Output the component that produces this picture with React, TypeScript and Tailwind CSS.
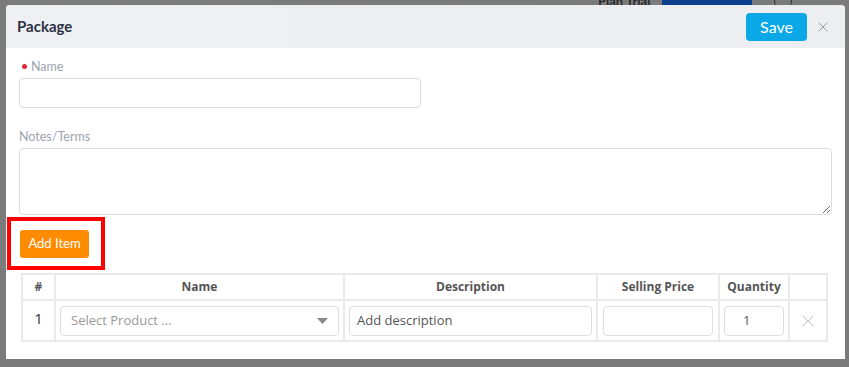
import React from 'react';
import { X } from 'lucide-react';

const cols = [
  { label: '#', w: 'w-[33px]' },
  { label: 'Name', w: 'w-[289px]' },
  { label: 'Description', w: 'w-[253px]' },
  { label: 'Selling Price', w: 'w-[122px]' },
  { label: 'Quantity', w: 'w-[70px]' },
  { label: '', w: 'flex-1' },
];

const App: React.FC = () => {
  return (
    <div className="relative w-[849px] h-[367px] overflow-hidden bg-[#7b7b7b] font-['Lato',sans-serif]">
      {/* page behind the overlay */}
      <div className="flex items-start h-[12px] pl-[598px] gap-[8px]">
        <span className="text-[13px] font-bold leading-[10px] text-[#2a2a2a] -mt-[4px]">Plan Trial</span>
        <div className="w-[90px] h-[12px] bg-[#0b3f8c] ml-[4px]" />
        <div className="w-[18px] h-[18px] rounded-full border border-[#333] ml-[14px] -mt-[8px]" />
      </div>

      {/* modal */}
      <div className="absolute left-[6px] top-[5px] w-[839px] h-[354px] bg-white rounded-t-[4px] flex flex-col">
        <div className="h-[43px] flex items-center pl-[11px] pr-[14px] bg-gradient-to-r from-[#eef0f4] to-[#eceef2] rounded-t-[4px]">
          <h2 className="text-[15px] font-bold text-[#2d3142] flex-1">Package</h2>
          <button className="h-[28px] w-[61px] rounded-[4px] bg-[#0aa8e6] text-white text-[16px] mr-[8px]">Save</button>
          <X size={16} strokeWidth={1.2} className="text-[#8a8a8a]" />
        </div>

        <div className="flex flex-col pl-[13px] pr-[13px]">
          <label className="mt-[11px] h-[15px] leading-[15px] flex items-center gap-[4px] text-[12.5px] text-[#9aa4b0]">
            <span className="w-[5px] h-[5px] rounded-full bg-[#e0263a] ml-[3px]" />
            Name
          </label>
          <input className="block mt-[4px] w-[402px] h-[30px] border border-[#dedede] rounded-[4px] outline-none" />

          <label className="mt-[21px] h-[15px] leading-[15px] text-[12.5px] text-[#9aa4b0]">Notes/Terms</label>
          <textarea className="block mt-[4px] w-[813px] h-[67px] border border-[#dedede] rounded-[4px] outline-none resize-y" />

          <div className="-ml-[12px] mt-[2px] w-[98px] h-[53px] border-[4px] border-[#ff0000] flex items-start pl-[9px] pt-[9px]">
            <button className="h-[28px] w-[69px] rounded-[3px] bg-[#ff8c00] text-white text-[13px]">Add Item</button>
          </div>

          <div className="mt-[3px] ml-[2px] w-[807px] border-2 border-[#eaeaea] font-['Open_Sans',sans-serif]">
            <div className="flex h-[26px] border-b-2 border-[#eaeaea]">
              {cols.map((c, i) => (
                <div
                  key={i}
                  className={`${c.w} flex items-center justify-center text-[12px] font-bold text-[#555] ${i < cols.length - 1 ? 'border-r-2 border-[#eaeaea]' : ''}`}
                >
                  {c.label}
                </div>
              ))}
            </div>
            <div className="flex h-[39px]">
              <div className="w-[33px] border-r-2 border-[#eaeaea] flex justify-center pt-[6px] text-[15px] text-[#333]">1</div>
              <div className="w-[289px] border-r-2 border-[#eaeaea] flex items-center px-[4px]">
                <div className="w-full h-[30px] border border-[#dedede] rounded-[4px] flex items-center pl-[10px] pr-[10px]">
                  <span className="flex-1 text-[13px] text-[#999]">Select Product ...</span>
                  <svg width="11" height="6" viewBox="0 0 11 6"><path d="M0 0h11L5.5 6z" fill="#888" /></svg>
                </div>
              </div>
              <div className="w-[253px] border-r-2 border-[#eaeaea] flex items-center px-[4px]">
                <div className="w-full h-[30px] border border-[#dedede] rounded-[4px] flex items-center pl-[7px] text-[13px] text-[#555]">
                  Add description
                </div>
              </div>
              <div className="w-[122px] border-r-2 border-[#eaeaea] flex items-center px-[5px]">
                <div className="w-full h-[30px] border border-[#dedede] rounded-[4px]" />
              </div>
              <div className="w-[70px] border-r-2 border-[#eaeaea] flex items-center px-[4px]">
                <div className="w-full h-[30px] border border-[#dedede] rounded-[4px] flex items-center pl-[18px] text-[13px] text-[#555]">1</div>
              </div>
              <div className="flex-1 flex items-center justify-center">
                <X size={20} strokeWidth={1} className="text-[#b5b5b5]" />
              </div>
            </div>
          </div>
        </div>
      </div>
    </div>
  );
};

export default App;
